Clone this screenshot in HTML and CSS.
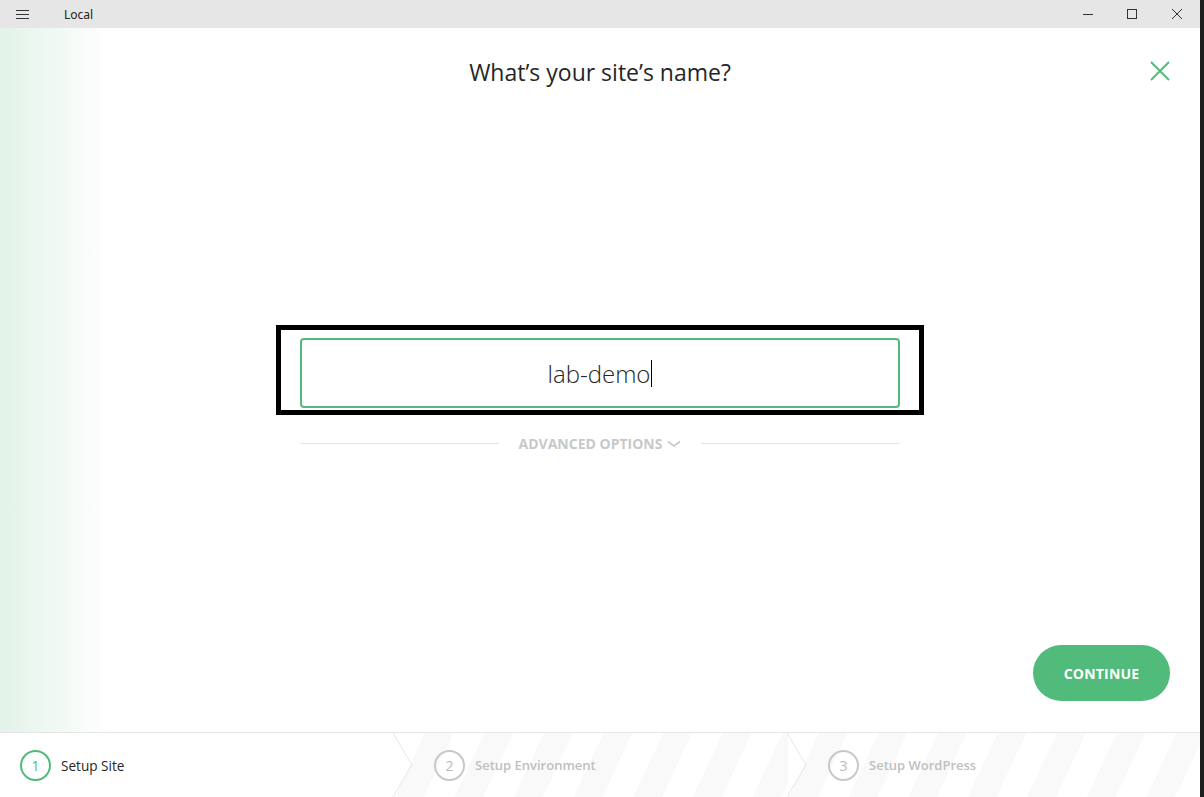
FILE: index.html
```html
<!DOCTYPE html>
<html>
<head>
<meta charset="utf-8">
<link rel="stylesheet" href="styles.css">
</head>
<body>
<div class="screen">
  <div class="window">
    <div class="titlebar">
      <div class="tb-left">
        <svg class="hamburger" width="13" height="9" viewBox="0 0 13 9"><path d="M0 0.5H13M0 4.5H13M0 8.5H13" stroke="#333" stroke-width="1"/></svg>
        <span class="app-name">Local</span>
      </div>
      <div class="tb-controls">
        <span class="ctl"><svg width="10" height="10" viewBox="0 0 10 10"><path d="M0 5.5H10" stroke="#333" stroke-width="1"/></svg></span>
        <span class="ctl"><svg width="10" height="10" viewBox="0 0 10 10"><rect x="0.5" y="0.5" width="9" height="9" fill="none" stroke="#333" stroke-width="1"/></svg></span>
        <span class="ctl"><svg width="10" height="10" viewBox="0 0 10 10"><path d="M0 0L10 10M10 0L0 10" stroke="#333" stroke-width="1"/></svg></span>
      </div>
    </div>
    <div class="main">
      <div class="close-x">
        <svg width="20" height="20" viewBox="0 0 20 20"><path d="M1 1L19 19M19 1L1 19" stroke="#51bb7b" stroke-width="2"/></svg>
      </div>
      <h1 class="heading">What’s your site’s name?</h1>
      <div class="form">
        <div class="frame">
          <div class="name-input"><span class="value">lab-demo</span><span class="caret"></span></div>
        </div>
        <div class="advanced">
          <span class="rule"></span>
          <span class="adv-label">ADVANCED OPTIONS <svg width="14" height="8" viewBox="0 0 14 8"><path d="M1 1.5L7 6L13 1.5" fill="none" stroke="#c8c8c8" stroke-width="1.6"/></svg></span>
          <span class="rule"></span>
        </div>
      </div>
      <div class="actions">
        <button class="continue">CONTINUE</button>
      </div>
    </div>
    <div class="steps">
      <div class="step active">
        <span class="num">1</span><span class="label">Setup Site</span>
        <svg class="chev" width="20" height="64" viewBox="0 0 20 64"><path d="M0 0L19 32L0 64" fill="none" stroke="#e6e6e6" stroke-width="1"/></svg>
      </div>
      <div class="step">
        <span class="num">2</span><span class="label">Setup Environment</span>
        <svg class="chev" width="20" height="64" viewBox="0 0 20 64"><path d="M0 0L19 32L0 64" fill="none" stroke="#e6e6e6" stroke-width="1"/></svg>
      </div>
      <div class="step last">
        <span class="num">3</span><span class="label">Setup WordPress</span>
      </div>
    </div>
  </div>
  <div class="edge"></div>
</div>
</body>
</html>
```
FILE: styles.css
```css
* { box-sizing: border-box; }
html, body { margin: 0; padding: 0; }
body { width: 1204px; height: 797px; overflow: hidden; font-family: "Open Sans", "Noto Sans", sans-serif; background: #fff; }

.screen { display: flex; width: 1204px; height: 797px; }
.window { width: 1200px; height: 797px; display: flex; flex-direction: column; }
.edge { width: 4px; height: 797px; background: #1e1e1e; }

.titlebar { height: 28px; background: #e6e6e6; display: flex; align-items: center; justify-content: space-between; }
.tb-left { display: flex; align-items: center; }
.hamburger { margin-left: 16px; }
.app-name { margin-left: 35px; font-size: 12px; color: #222; font-family: "Noto Sans", "Open Sans", sans-serif; }
.tb-controls { display: flex; height: 28px; }
.ctl { width: 44px; height: 28px; display: flex; align-items: center; justify-content: center; }
.ctl:last-child { width: 46px; }

.main { position: relative; flex: 1; display: flex; flex-direction: column; align-items: center;
  background: linear-gradient(to right, #e2f3e8 0px, #eff8f2 50px, #ffffff 110px); }
.close-x { position: absolute; right: 30px; top: 33px; width: 20px; height: 20px; }
.heading { margin: 28px 0 0; font-size: 23px; font-weight: 400; color: #262626; line-height: 32px; }

.form { margin-top: 237px; width: 648px; display: flex; flex-direction: column; align-items: center; }
.frame { width: 648px; height: 90px; border: 5px solid #000; display: flex; justify-content: center; padding-top: 8px; }
.name-input { width: 600px; height: 70px; border: 2px solid #51bb7b; border-radius: 4px; display: flex; align-items: center; justify-content: center; }
.value { font-size: 24px; font-weight: 300; color: #262626; }
.caret { display: inline-block; width: 1px; height: 27px; background: #000; margin-left: 1px; }

.advanced { width: 600px; margin-top: 19px; display: flex; align-items: center; }
.rule { flex: 1; height: 1px; background: #e4e4e4; }
.adv-label { padding: 0 20px; font-size: 14px; font-weight: 700; color: #c8c8c8; display: flex; align-items: center; gap: 5px; }

.actions { margin-top: auto; margin-bottom: 31px; align-self: flex-end; margin-right: 30px; }
.continue { width: 137px; height: 56px; border: 0; border-radius: 28px; background: #51bb7b; color: #fff; font-family: "Open Sans", sans-serif; font-weight: 700; font-size: 14px; letter-spacing: 0.2px; }

.steps { height: 65px; border-top: 1px solid #e6e6e6; display: flex; background: #fff; }
.step { position: relative; width: 394px; display: flex; align-items: center; padding-left: 20px;
  background: repeating-linear-gradient(115deg, #fff 0 28px, #f9f9f9 28px 54px); }
.step.active { background: #fff; }
.step.last { flex: 1; }
.step + .step { padding-left: 40px; }
.num { width: 31px; height: 31px; border: 2px solid #c8c8c8; border-radius: 50%; display: flex; align-items: center; justify-content: center; font-size: 14px; color: #bbb; }
.active .num { border-color: #51bb7b; color: #51bb7b; }
.label { margin-left: 10px; font-size: 13px; color: #c0c0c0; font-weight: 600; }
.active .label { color: #262626; font-weight: 400; font-size: 13.6px; }
.chev { position: absolute; right: -19px; top: 0; z-index: 2; }
```
